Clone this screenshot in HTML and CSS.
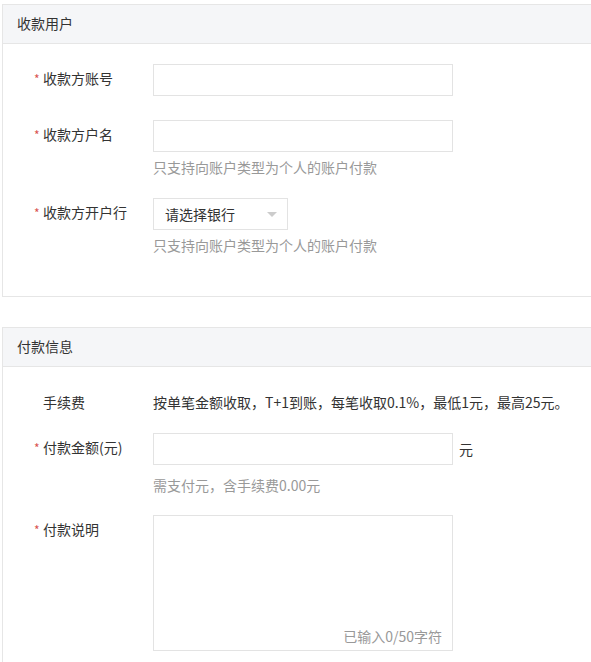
FILE: index.html
```html
<!DOCTYPE html>
<html lang="zh-CN">
<head>
<meta charset="utf-8">
<title>付款</title>
<link rel="stylesheet" href="styles.css">
</head>
<body>
<div class="page">
  <section class="card">
    <div class="card-header">收款用户</div>
    <div class="card-body body-1">
      <div class="item item-a">
        <div class="label"><span class="req">*</span>收款方账号</div>
        <div class="control"><div class="input"></div></div>
      </div>
      <div class="item item-b">
        <div class="label"><span class="req">*</span>收款方户名</div>
        <div class="control">
          <div class="input"></div>
          <div class="hint hint-a">只支持向账户类型为个人的账户付款</div>
        </div>
      </div>
      <div class="item">
        <div class="label"><span class="req">*</span>收款方开户行</div>
        <div class="control">
          <div class="select"><span>请选择银行</span><i class="caret"></i></div>
          <div class="hint hint-a">只支持向账户类型为个人的账户付款</div>
        </div>
      </div>
    </div>
  </section>

  <section class="card">
    <div class="card-header">付款信息</div>
    <div class="card-body body-2">
      <div class="item item-fee">
        <div class="label label-plain"><span class="req blank"></span>手续费</div>
        <div class="control text">按单笔金额收取，T+1到账，每笔收取0.1%，最低1元，最高25元。</div>
      </div>
      <div class="item item-amount">
        <div class="label"><span class="req">*</span>付款金额(元)</div>
        <div class="control">
          <div class="inline">
            <div class="input"></div>
            <span class="unit">元</span>
          </div>
          <div class="hint hint-b">需支付元，含手续费0.00元</div>
        </div>
      </div>
      <div class="item">
        <div class="label"><span class="req">*</span>付款说明</div>
        <div class="control">
          <div class="textarea"><span class="count">已输入0/50字符</span></div>
        </div>
      </div>
    </div>
  </section>
</div>
</body>
</html>
```

FILE: styles.css
```css
html, body {
  margin: 0;
  padding: 0;
  background: #ffffff;
  overflow: hidden;
}

body {
  font-family: "Noto Sans CJK SC", "Noto Sans", sans-serif;
  font-size: 14px;
  color: #333333;
}

.page {
  padding: 4px 0 0 2px;
}

.card {
  border: 1px solid #e6e6e6;
  border-right: none;
  background: #ffffff;
  margin-bottom: 30px;
}

.card-header {
  height: 38px;
  line-height: 37px;
  padding-left: 14px;
  background: #f5f6f8;
  border-bottom: 1px solid #e6e6e6;
  font-size: 14px;
  color: #333333;
}

.card-body {
  padding-top: 20px;
}

.body-1 {
  padding-bottom: 41px;
}

.body-2 {
  padding-bottom: 20px;
}

.item {
  display: flex;
  align-items: flex-start;
}

.item-a {
  margin-bottom: 24px;
}

.item-b {
  margin-bottom: 21px;
}

.item-fee {
  margin-bottom: 14px;
}

.item-amount {
  margin-bottom: 20px;
}

.label {
  width: 119px;
  padding-left: 31px;
  flex: none;
  line-height: 29px;
  height: 32px;
  font-size: 14px;
  color: #333333;
  white-space: nowrap;
}

.label-plain {
  line-height: 31px;
}

.req {
  display: inline-block;
  width: 9px;
  color: #d9534f;
  font-size: 12px;
}

.control {
  flex: none;
}

.text {
  line-height: 31px;
  font-size: 14px;
  white-space: nowrap;
}

.input {
  width: 298px;
  height: 30px;
  border: 1px solid #e3e3e3;
  background: #ffffff;
}

.inline {
  display: flex;
  align-items: center;
}

.unit {
  margin-left: 6px;
  font-size: 14px;
  line-height: 29px;
}

.hint {
  font-size: 14px;
  line-height: 20px;
  color: #999999;
  white-space: nowrap;
}

.hint-a {
  padding-top: 5px;
}

.hint-b {
  padding-top: 10px;
}

.select {
  width: 122px;
  height: 30px;
  border: 1px solid #e3e3e3;
  padding-left: 11px;
  display: flex;
  align-items: center;
  justify-content: space-between;
  font-size: 14px;
  color: #333333;
}

.caret {
  width: 0;
  height: 0;
  margin-right: 10px;
  border-left: 5px solid transparent;
  border-right: 5px solid transparent;
  border-top: 5px solid #cccccc;
}

.textarea {
  width: 298px;
  height: 134px;
  border: 1px solid #e3e3e3;
  display: flex;
  align-items: flex-end;
  justify-content: flex-end;
}

.count {
  font-size: 14px;
  color: #999999;
  line-height: 20px;
  padding: 0 10px 4px 0;
}
```
